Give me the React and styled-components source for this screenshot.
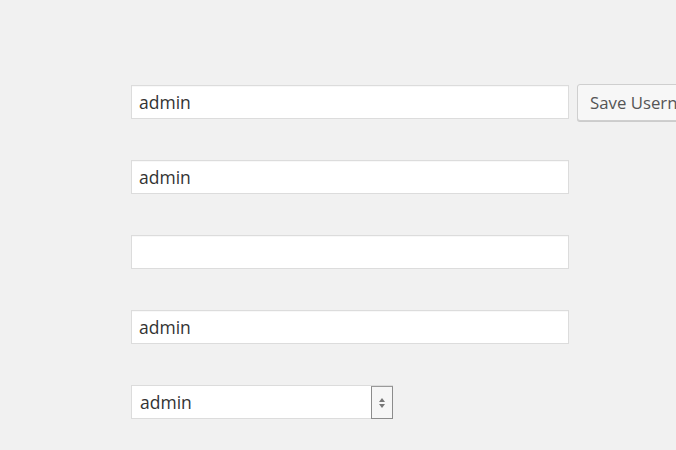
import React from 'react'
import styled, { createGlobalStyle } from 'styled-components'

const GlobalStyle = createGlobalStyle`
  html, body {
    margin: 0;
    background: #f1f1f1;
    overflow: hidden;
  }
  body {
    font-family: "Open Sans", "Noto Sans", sans-serif;
  }
`

const Page = styled.form`
  width: 676px;
  height: 450px;
  box-sizing: border-box;
  padding: 85px 0 0 131px;
  display: flex;
  flex-direction: column;
  gap: 41px;
  overflow: hidden;
`

const Row = styled.div`
  display: flex;
  align-items: center;
  gap: 8px;
  height: 34px;
`

const TextInput = styled.input`
  box-sizing: border-box;
  flex-shrink: 0;
  width: ${p => p.$width || 438}px;
  height: 34px;
  margin: 0;
  padding: 0 7px;
  border: 1px solid #dcdcdc;
  background: #fff;
  color: #333;
  font-family: "Open Sans", "Noto Sans", sans-serif;
  font-size: 17.5px;
  outline: none;
  box-shadow: inset 0 1px 1px rgba(0,0,0,.03);
`

const Button = styled.button`
  box-sizing: border-box;
  flex-shrink: 0;
  height: 37px;
  padding: 0 12px;
  border: 1px solid #cfcfcf;
  border-radius: 3px;
  background: #f7f7f7;
  color: #555;
  font-family: "Open Sans", "Noto Sans", sans-serif;
  font-size: 16.8px;
  white-space: nowrap;
  box-shadow: 0 1px 0 #ccc;
`

const SelectBox = styled.div`
  box-sizing: border-box;
  width: 262px;
  height: 34px;
  display: flex;
  align-items: stretch;
  border: 1px solid #dcdcdc;
  background: #fff;
`

const SelectValue = styled.div`
  flex: 1;
  display: flex;
  align-items: center;
  padding: 0 8px;
  color: #333;
  font-size: 17.5px;
`

const Spinner = styled.div`
  box-sizing: border-box;
  width: 22px;
  margin: 0 -1px -1px 0;
  border: 1px solid #8c8c8c;
  border-top-color: #9a9a9a;
  background: #f6f6f6;
  display: flex;
  flex-direction: column;
  align-items: center;
  justify-content: center;
  gap: 2px;
`

const Arrow = styled.span`
  width: 0;
  height: 0;
  border-left: 3px solid transparent;
  border-right: 3px solid transparent;
  ${p => p.$up
    ? 'border-bottom: 4px solid #777;'
    : 'border-top: 4px solid #777;'}
`

export default function App() {
  return (
    <>
      <GlobalStyle />
      <Page onSubmit={e => e.preventDefault()}>
        <Row>
          <TextInput defaultValue="admin" />
          <Button type="submit">Save Username</Button>
        </Row>
        <Row>
          <TextInput defaultValue="admin" />
        </Row>
        <Row>
          <TextInput defaultValue="" />
        </Row>
        <Row>
          <TextInput defaultValue="admin" />
        </Row>
        <Row>
          <SelectBox>
            <SelectValue>admin</SelectValue>
            <Spinner>
              <Arrow $up />
              <Arrow />
            </Spinner>
          </SelectBox>
        </Row>
      </Page>
    </>
  )
}
